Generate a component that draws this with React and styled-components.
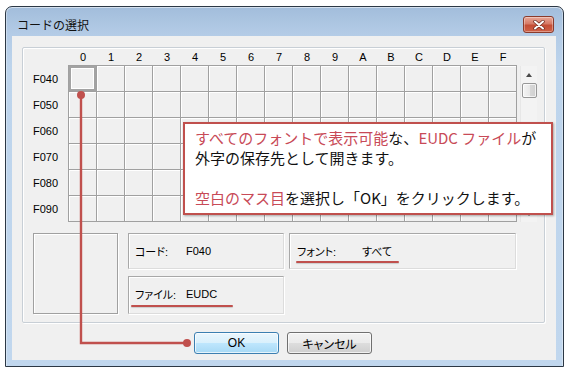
import React from "react";
import styled, { createGlobalStyle } from "styled-components";

const RED = "#c0504d";
const RED_TEXT = "#c84a57";

const Global = createGlobalStyle`
  html, body { margin: 0; padding: 0; background: #fff; }
  body { font-family: "Liberation Sans", "Noto Sans CJK JP", sans-serif; color: #000; }
  * { box-sizing: border-box; }
`;

const Page = styled.div`
  position: relative;
  width: 567px;
  height: 373px;
  padding: 6px 3px 6px 5px;
  background: #fff;
  display: flex;
`;

const Window = styled.div`
  width: 559px;
  height: 361px;
  border: 1px solid #2c3845;
  border-radius: 7px 7px 0 0;
  background: linear-gradient(180deg, #a2bddb 0px, #b3cbe6 26px, #bdd4ec 60px, #c1d7ee 100%);
  box-shadow: inset 0 1px 0 rgba(255, 255, 255, 0.55), inset 1px 0 0 rgba(255, 255, 255, 0.35), inset -1px 0 0 rgba(255, 255, 255, 0.35);
  display: flex;
  flex-direction: column;
  padding: 0 7px 6px 6px;
`;

const TitleBar = styled.div`
  height: 29px;
  padding: 6px 2px 0 5px;
  display: flex;
  align-items: center;
  justify-content: space-between;
`;

const Title = styled.span`
  font-family: "Noto Sans CJK JP", sans-serif;
  font-size: 12px;
  color: #111;
`;

const CloseButton = styled.div`
  width: 31px;
  height: 17px;
  border: 1px solid #8a3b2c;
  border-radius: 3px;
  background: linear-gradient(180deg, #e9a898 0%, #d67a66 45%, #c44d35 55%, #cf6147 100%);
  box-shadow: inset 0 0 0 1px rgba(255, 255, 255, 0.35);
  display: flex;
  align-items: center;
  justify-content: center;
`;

const Content = styled.div`
  height: 324px;
  background: #f0f0f0;
  padding: 11px 11px 6px 10px;
  display: flex;
  flex-direction: column;
`;

const GroupBox = styled.div`
  width: 523px;
  height: 276px;
  border: 1px solid #c8cfd6;
  border-radius: 2px;
  box-shadow: inset 1px 1px 0 #fff, 1px 1px 0 #fff;
  display: flex;
  flex-direction: column;
`;

const Top = styled.div`
  display: flex;
`;

const RowHeads = styled.div`
  width: 45px;
  padding-top: 18px;
  display: flex;
  flex-direction: column;
`;

const HeadLabel = styled.div`
  height: ${(p) => (p.$w ? "17px" : "26px")};
  width: ${(p) => (p.$w ? "28px" : "auto")};
  display: flex;
  align-items: center;
  justify-content: center;
  font-size: 11px;
  color: #000;
`;

const Matrix = styled.div`
  display: flex;
  flex-direction: column;
`;

const ColHeads = styled.div`
  height: 17px;
  padding-left: 1px;
  display: flex;
`;

const Cells = styled.div`
  display: grid;
  grid-template-columns: repeat(16, 28px);
  grid-auto-rows: 26px;
  border-top: 1px solid #a0a0a0;
  border-left: 1px solid #a0a0a0;
`;

const Cell = styled.div`
  border-right: 1px solid #a0a0a0;
  border-bottom: 1px solid #a0a0a0;
  background: #f0f0f0;
  box-shadow: ${(p) =>
    p.$selected ? "inset 0 0 0 2px #a3a3a3, inset 0 0 0 3px #fff" : "inset 1px 1px 0 #fff"};
`;

const ScrollBar = styled.div`
  width: 17px;
  height: 156px;
  margin: 18px 0 0 3px;
  background: #f3f3f3;
  border-left: 1px solid #e7e7e7;
  display: flex;
  flex-direction: column;
  align-items: center;
`;

const ArrowBox = styled.div`
  width: 16px;
  height: 17px;
  display: flex;
  align-items: center;
  justify-content: center;
`;

const Triangle = styled.div`
  width: 0;
  height: 0;
  border-left: 3.5px solid transparent;
  border-right: 3.5px solid transparent;
  ${(p) => (p.$down ? "border-top: 4px solid #4a4a4a;" : "border-bottom: 4px solid #4a4a4a;")}
`;

const Thumb = styled.div`
  width: 15px;
  height: 15px;
  border: 1px solid #979797;
  border-radius: 2px;
  background: linear-gradient(90deg, #f4f4f4 0%, #e8e8e8 50%, #d8d8d8 51%, #d0d0d0 100%);
  box-shadow: inset 0 0 0 1px rgba(255, 255, 255, 0.7);
`;

const Spacer = styled.div`
  flex: 1;
`;

const Bottom = styled.div`
  margin-top: 11px;
  padding-left: 10px;
  display: flex;
  align-items: flex-start;
  gap: 10px;
`;

const Preview = styled.div`
  width: 85px;
  height: 81px;
  border: 1px solid #a0a0a0;
  box-shadow: inset 1px 1px 0 #fff, 1px 1px 0 #fff;
  background: #f0f0f0;
`;

const InfoColumn = styled.div`
  display: flex;
  flex-direction: column;
  gap: 7px;
`;

const InfoBox = styled.div`
  position: relative;
  width: ${(p) => p.$w}px;
  height: ${(p) => p.$h}px;
  margin-left: ${(p) => p.$ml || 0}px;
  padding: 0 0 ${(p) => p.$pb || 0}px ${(p) => p.$pl}px;
  border: 1px solid #a8a8a8;
  border-right-color: #dcdcdc;
  border-bottom-color: #dcdcdc;
  box-shadow: inset 1px 1px 0 #fff, 1px 1px 0 #fff;
  display: flex;
  align-items: center;
  font-size: 11px;
  font-feature-settings: "palt";
`;

const InfoLabel = styled.span`
  width: ${(p) => p.$w}px;
  flex: none;
`;

const Mark = styled.div`
  position: absolute;
  left: ${(p) => p.$l}px;
  top: ${(p) => p.$t}px;
  width: ${(p) => p.$w}px;
  height: 2px;
  background: ${RED};
  border-radius: 1px;
  box-shadow: 0 1px 1px rgba(0, 0, 0, 0.15);
`;

const ButtonRow = styled.div`
  margin-top: 9px;
  display: flex;
  justify-content: center;
  gap: 8px;
  padding-right: 1px;
`;

const Button = styled.div`
  width: 85px;
  height: 22px;
  border-radius: 3px;
  border: 1px solid ${(p) => (p.$primary ? "#3c7fb1" : "#707070")};
  background: ${(p) =>
    p.$primary
      ? "linear-gradient(180deg, #eaf6fd 0%, #d9f0fc 50%, #bee6fd 51%, #a7d9f5 100%)"
      : "linear-gradient(180deg, #f2f2f2 0%, #ebebeb 50%, #dddddd 51%, #cfcfcf 100%)"};
  box-shadow: inset 0 0 0 1px rgba(255, 255, 255, 0.7);
  display: flex;
  align-items: center;
  justify-content: center;
  font-size: 12px;
  font-feature-settings: "palt";
`;

const Callout = styled.div`
  position: absolute;
  left: 183px;
  top: 122px;
  width: 370px;
  height: 93px;
  background: #fff;
  border: 2px solid ${RED};
  box-shadow: 1px 1px 2px rgba(0, 0, 0, 0.3);
  padding: 4px 10px;
  font-family: "Noto Sans CJK JP", sans-serif;
  font-size: 15px;
  line-height: 20px;
  color: #111;
  white-space: nowrap;
`;

const Line = styled.div`
  height: 20px;
`;

const Hi = styled.span`
  color: ${RED_TEXT};
`;

const Overlay = styled.svg`
  position: absolute;
  left: 0;
  top: 0;
  pointer-events: none;
`;

const cols = ["0", "1", "2", "3", "4", "5", "6", "7", "8", "9", "A", "B", "C", "D", "E", "F"];
const rows = ["F040", "F050", "F060", "F070", "F080", "F090"];

export default function App() {
  return (
    <Page>
      <Global />
      <Window>
        <TitleBar>
          <Title>コードの選択</Title>
          <CloseButton>
            <svg width="12" height="10" viewBox="0 0 12 10">
              <path d="M2 1.5 L10 8.5 M10 1.5 L2 8.5" stroke="#6b2a1e" strokeWidth="3.4" strokeLinecap="round" />
              <path d="M2 1.5 L10 8.5 M10 1.5 L2 8.5" stroke="#fff" strokeWidth="2" strokeLinecap="round" />
            </svg>
          </CloseButton>
        </TitleBar>
        <Content>
          <GroupBox>
            <Top>
              <RowHeads>
                {rows.map((r) => (
                  <HeadLabel key={r}>{r}</HeadLabel>
                ))}
              </RowHeads>
              <Matrix>
                <ColHeads>
                  {cols.map((c) => (
                    <HeadLabel key={c} $w>
                      {c}
                    </HeadLabel>
                  ))}
                </ColHeads>
                <Cells>
                  {rows.map((r, ri) =>
                    cols.map((c, ci) => <Cell key={r + c} $selected={ri === 0 && ci === 0} />)
                  )}
                </Cells>
              </Matrix>
              <ScrollBar>
                <ArrowBox>
                  <Triangle />
                </ArrowBox>
                <Thumb />
                <Spacer />
                <ArrowBox>
                  <Triangle $down />
                </ArrowBox>
              </ScrollBar>
            </Top>
            <Bottom>
              <Preview />
              <InfoColumn>
                <InfoBox $w={156} $h={36} $pl={6}>
                  <InfoLabel $w={51}>コード:</InfoLabel>
                  <span>F040</span>
                </InfoBox>
                <InfoBox $w={156} $h={38} $pl={6} $pb={3}>
                  <InfoLabel $w={51}>ファイル:</InfoLabel>
                  <span>EUDC</span>
                  <Mark $l={2} $t={28} $w={102} />
                </InfoBox>
              </InfoColumn>
              <InfoBox $w={227} $h={36} $pl={7} $ml={-5}>
                <InfoLabel $w={65}>フォント:</InfoLabel>
                <span>すべて</span>
                <Mark $l={6} $t={27} $w={103} />
              </InfoBox>
            </Bottom>
          </GroupBox>
          <ButtonRow>
            <Button $primary>OK</Button>
            <Button>キャンセル</Button>
          </ButtonRow>
        </Content>
      </Window>
      <Callout>
        <Line>
          <Hi>すべてのフォントで表示可能</Hi>な、<Hi>EUDC ファイル</Hi>が
        </Line>
        <Line>外字の保存先として開きます。</Line>
        <Line />
        <Line>
          <Hi>空白のマス目</Hi>を選択し「OK」をクリックします。
        </Line>
      </Callout>
      <Overlay width="567" height="373" viewBox="0 0 567 373">
        <path d="M81 95 L81 343 L187 343" fill="none" stroke={RED} strokeWidth="2.4" />
        <circle cx="81" cy="95" r="4" fill={RED} />
        <circle cx="187" cy="343" r="4" fill={RED} />
      </Overlay>
    </Page>
  );
}
